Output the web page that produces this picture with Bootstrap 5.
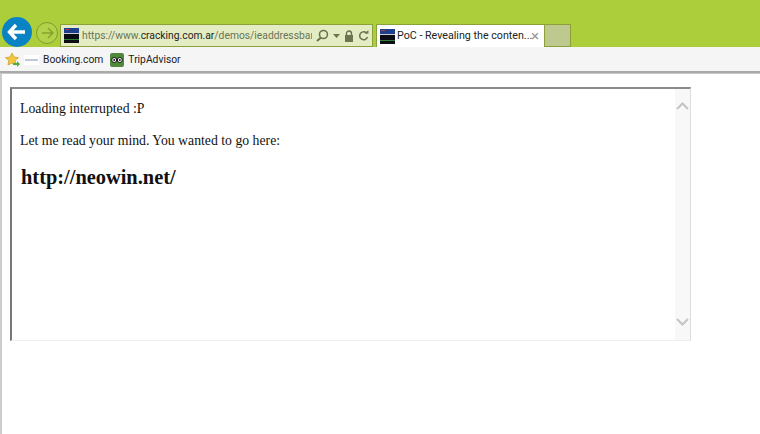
<!DOCTYPE html>
<html lang="en">
<head>
<meta charset="utf-8">
<title>PoC</title>
<link rel="stylesheet" href="https://cdn.jsdelivr.net/npm/bootstrap@5.3.0/dist/css/bootstrap.min.css">
<style>
html,body{height:100%;overflow:hidden}
body{background:#fff;font-family:Roboto,"Liberation Sans",sans-serif;font-size:10.3px;color:#222}
.chrome-top{height:47px;background:#acce3a;padding-left:2px}
.back-btn{width:30px;height:30px;background:#0a83c5;border-radius:50%;flex:none}
.fwd-btn{width:22px;height:22px;border:1px solid #7f9c2a;border-radius:50%;background:#b3d24c;margin:0 2px 3px 4px;flex:none}
.addr{width:313px;height:23px;background:#e4ecc4;border:1px solid #8aa038;padding:0 3px;flex:none;white-space:nowrap;overflow:hidden}
.addr-ico{margin-right:3px;flex:none}
.addr-url{width:231px;overflow:hidden;color:#6a7358;font-size:10.3px}
.addr-url b{font-weight:400;color:#1d1d1d}
.tab-on{width:169px;height:23px;background:#fff;border:1px solid #8aa038;border-bottom:0;margin-left:3px;padding-left:3px;flex:none;white-space:nowrap;color:#222}
.tab-ico{margin-right:2px;flex:none}
.tab-title{width:133px;font-size:10.7px;padding-top:1px}
.tab-x{color:#999;font-size:15px;line-height:1;margin-left:1px}
.tab-new{width:26px;height:23px;background:#bdc98e;border:1px solid #8aa038;border-left:0;flex:none}
.fav-bar{height:24px;background:#f5f5f5;padding:1px 0 0 5px;color:#222}
.fav-rule{height:3px;background:#a9a9a9;border-bottom:1px solid #c8c8c8}
.page-area{height:360px;border-left:2px solid #cdcdcd;padding:13px 0 0 8px}
.frame-box{width:681px;height:254px;border-style:solid;border-width:2px 1px 1px 2px;border-color:#8a8a8a #dcdcdc #eeeeee #777777;overflow:hidden}
.frame-text{padding:11px 0 0 8px;font-family:"Liberation Serif",serif;font-size:13.75px;color:#111}
.frame-text p{margin:0 0 15px;line-height:17px}
.frame-text h3{margin:0;padding:1px 0 0 1px;font:700 20.4px/24px "Liberation Serif",serif;color:#111}
.scroll-rail{width:15px;background:#f8f8f8;flex:none;padding:13px 0 14px}
.booking-thumb{width:15px;height:10px;background:#fff;flex:none}
.ta-ico{width:14px;height:14px;background:#4e8a3a;border-radius:2px;flex:none;margin-left:7px}
</style>
</head>
<body>
<div class="chrome-top d-flex align-items-end">
  <div class="back-btn d-flex align-items-center justify-content-center">
    <svg width="20" height="18" viewBox="0 0 20 18"><path d="M9 2 2.500 9 9 16M3 9h15" fill="none" stroke="#fff" stroke-width="3.400"/></svg>
  </div>
  <div class="fwd-btn d-flex align-items-center justify-content-center">
    <svg width="13" height="12" viewBox="0 0 13 12"><path d="M7 1l5 5-5 5M12 6H1" fill="none" stroke="#86a32c" stroke-width="1.500"/></svg>
  </div>
  <div class="addr d-flex align-items-center">
    <svg class="addr-ico" width="15" height="15" viewBox="0 0 15 15"><rect width="15" height="15" fill="#0c0c14"/><rect width="15" height="5" fill="#1d3f8c"/><rect x="1" y="1" width="4" height="1" fill="#c0392b"/><rect y="5" width="15" height="1" fill="#ccc"/><rect y="11" width="15" height="1" fill="#2e7d32"/></svg>
    <div class="addr-url">https://www.<b>cracking.com.ar</b>/demos/ieaddressbar</div>
    <svg class="ms-1" width="13" height="13" viewBox="0 0 13 13"><circle cx="7.500" cy="5.500" r="4" fill="none" stroke="#6b7350" stroke-width="1.600"/><path d="M5 8.500 1 12" stroke="#6b7350" stroke-width="2"/></svg>
    <svg class="ms-1" width="7" height="4" viewBox="0 0 7 4"><path d="M0 0h7L3.500 4z" fill="#6b7350"/></svg>
    <svg class="ms-1" width="10" height="12" viewBox="0 0 10 12"><path d="M2.500 5V3.500a2.500 2.500 0 0 1 5 0V5" fill="none" stroke="#6b7350" stroke-width="1.400"/><rect x="1" y="5" width="8" height="7" fill="#6b7350"/></svg>
    <svg class="ms-1" width="11" height="12" viewBox="0 0 11 12"><path d="M9 3.500A4 4 0 1 0 9.500 7" fill="none" stroke="#6b7350" stroke-width="1.500"/><path d="M6.500 3.500h4V0z" fill="#6b7350"/></svg>
  </div>
  <div class="tab-on d-flex align-items-center">
    <svg class="tab-ico" width="15" height="15" viewBox="0 0 15 15"><rect width="15" height="15" fill="#0c0c14"/><rect width="15" height="5" fill="#1d3f8c"/><rect x="1" y="1" width="4" height="1" fill="#c0392b"/><rect y="5" width="15" height="1" fill="#ccc"/><rect y="11" width="15" height="1" fill="#2e7d32"/></svg>
    <div class="tab-title">PoC - Revealing the conten...</div>
    <span class="tab-x">×</span>
  </div>
  <div class="tab-new"></div>
</div>
<div class="fav-bar d-flex align-items-center">
  <svg width="15" height="15" viewBox="0 0 15 15"><path d="M7 1l2 4 4.500.6-3.300 3 .8 4.400L7 11l-4 2 .8-4.400L.5 5.600 5 5z" fill="#f3c63f" stroke="#c79a1e" stroke-width=".7"/><path d="M8 11h4V9l3 3-3 3v-2H8z" fill="#4caf3c"/></svg>
  <div class="booking-thumb ms-1 d-flex align-items-center"><svg width="15" height="10" viewBox="0 0 15 10"><path d="M1 5h13" stroke="#7d93b5"/></svg></div>
  <span class="ms-1">Booking.com</span>
  <div class="ta-ico d-flex align-items-center justify-content-center"><svg width="12" height="8" viewBox="0 0 12 8"><circle cx="3.200" cy="4" r="2.500" fill="#fff" stroke="#111"/><circle cx="8.800" cy="4" r="2.500" fill="#fff" stroke="#111"/><circle cx="3.200" cy="4" r="1" fill="#111"/><circle cx="8.800" cy="4" r="1" fill="#111"/></svg></div>
  <span class="ms-1">TripAdvisor</span>
</div>
<div class="fav-rule"></div>
<div class="page-area">
  <div class="frame-box d-flex">
    <div class="frame-text flex-grow-1">
      <p>Loading interrupted :P</p>
      <p>Let me read your mind. You wanted to go here:</p>
      <h3>http://neowin.net/</h3>
    </div>
    <div class="scroll-rail d-flex flex-column justify-content-between align-items-center">
      <svg width="13" height="8" viewBox="0 0 13 8"><path d="M1 7l5.500-5.500L12 7" fill="none" stroke="#c4c4c4" stroke-width="2"/></svg>
      <svg width="13" height="8" viewBox="0 0 13 8"><path d="M1 1l5.500 5.500L12 1" fill="none" stroke="#c4c4c4" stroke-width="2"/></svg>
    </div>
  </div>
</div>
</body>
</html>
